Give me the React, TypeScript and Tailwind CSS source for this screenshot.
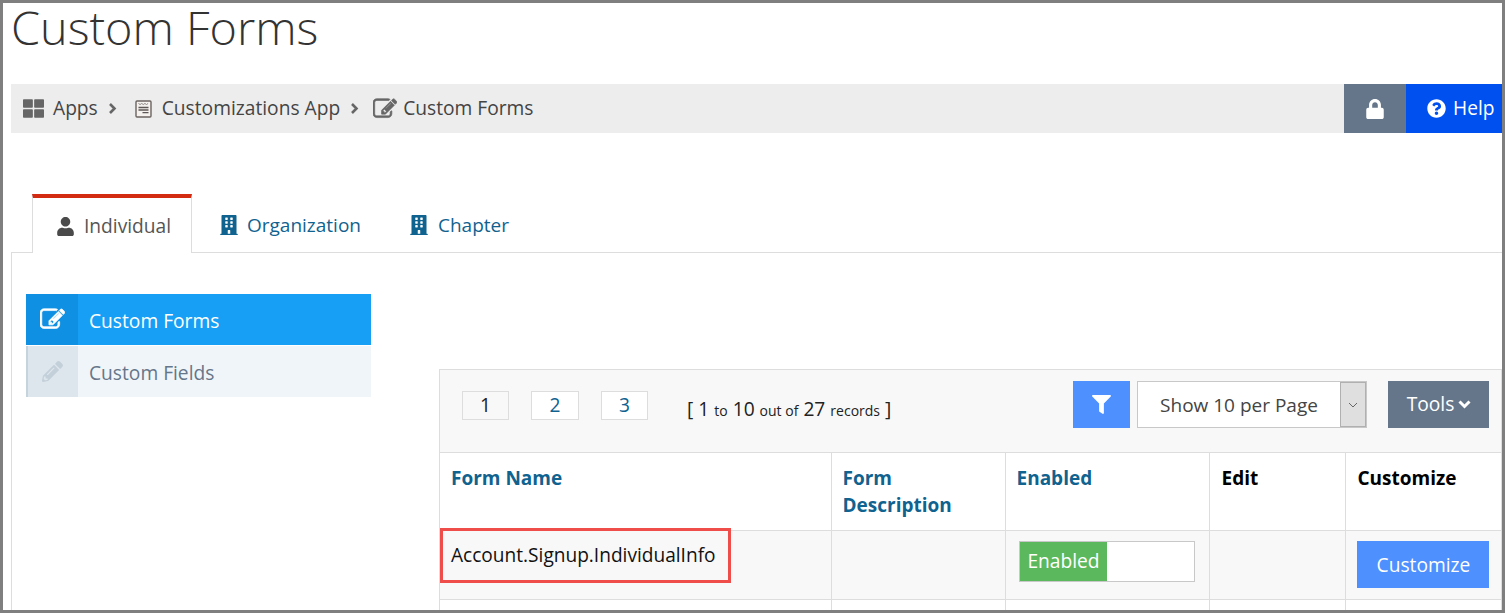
import { FaThLarge, FaUser, FaBuilding, FaPencilAlt, FaFilter, FaLock, FaQuestionCircle } from 'react-icons/fa'

const AppIcon = () => (
  <svg width="17" height="18" viewBox="0 0 17 18" className="shrink-0">
    <rect x="1" y="1" width="15" height="16" rx="1" fill="#f4f1ee" stroke="#6b6360" strokeWidth="1.4" />
    <path d="M3.5 3.5l1.6 1 1.6-1 1.6 1 1.6-1 1.6 1 1.6-1" fill="none" stroke="#8a8482" strokeWidth="1" />
    <path d="M3.5 7.5h10M3.5 10h10M7.5 12.7h6" stroke="#5d5755" strokeWidth="1.3" />
  </svg>
)

const EditIcon = ({ size }: { size: number }) => (
  <svg width={size} height={size} viewBox="0 0 1792 1792" fill="currentColor" stroke="currentColor" strokeWidth="50" className="shrink-0">
    <path d="M888 1184l116-116-152-152-116 116v56h96v96h56zm440-720q-16-16-33 1l-350 350q-17 17-1 33t33-1l350-350q17-17 1-33zm80 594v190q0 119-84.5 203.5t-203.5 84.5h-832q-119 0-203.5-84.5t-84.5-203.5v-832q0-119 84.5-203.5t203.5-84.5h832q63 0 117 25 15 7 18 23 3 17-9 29l-49 49q-14 14-32 8-23-6-45-6h-832q-66 0-113 47t-47 113v832q0 66 47 113t113 47h832q66 0 113-47t47-113v-126q0-13 9-22l64-64q15-15 35-7t20 29zm-96-738l288 288-672 672h-288v-288zm444 132l-92 92-288-288 92-92q28-28 68-28t68 28l152 152q28 28 28 68t-28 68z" />
  </svg>
)

const Sep = () => (
  <svg width="9" height="13" viewBox="0 0 9 13" className="mx-[10px] shrink-0">
    <path d="M2 2l4.5 4.5L2 11" fill="none" stroke="#666" strokeWidth="2.6" />
  </svg>
)

const ChevronDown = () => (
  <svg width="13" height="9" viewBox="0 0 13 9" className="shrink-0">
    <path d="M1.5 1.5l5 5 5-5" fill="none" stroke="#fff" strokeWidth="3" />
  </svg>
)

export default function App() {
  return (
    <div className="h-[613px] w-[1505px] overflow-hidden border-[3px] border-[#7f7f7f] bg-white text-[#333] font-['Open_Sans',sans-serif]">
      <h1 className="ml-[8px] h-[81px] text-[46.8px] font-light leading-[49px] text-[#333]">Custom Forms</h1>

      {/* Breadcrumb */}
      <div className="ml-[8px] flex h-[49px] items-center bg-[#ededed] text-[19.2px] text-[#444]">
        <FaThLarge className="ml-[12px] mr-[9px] text-[21px] text-[#666]" />
        <span>Apps</span>
        <Sep />
        <span className="ml-[8px]"><AppIcon /></span>
        <span className="ml-[10px]">Customizations App</span>
        <Sep />
        <span className="ml-[4px] text-[#666]"><EditIcon size={24} /></span>
        <span className="ml-[6px]">Custom Forms</span>
        <div className="ml-auto flex h-full text-white">
          <div className="flex w-[62px] items-center justify-center bg-[#66768a]">
            <FaLock className="text-[20px]" />
          </div>
          <div className="flex w-[96px] items-center gap-[7px] bg-[#0050ef] pl-[21px]">
            <FaQuestionCircle className="text-[19px]" />
            <span>Help</span>
          </div>
        </div>
      </div>

      {/* Tabs */}
      <div className="ml-[8px] mt-[61px] flex h-[59px] border-b border-[#dddddd] pl-[21px] text-[19px]">
        <div className="-mb-px flex w-[160px] items-center justify-center gap-[9px] border-x border-[#dddddd] border-t-4 border-t-[#d32a12] bg-white pl-[3px] pt-[2px] text-[19.2px] text-[#555]">
          <FaUser className="text-[19px] text-[#4a4a4a]" />
          <span>Individual</span>
        </div>
        <div className="ml-[27px] flex items-center gap-[8px] pt-[4px] text-[#10628f]">
          <FaBuilding className="text-[20px]" />
          <span>Organization</span>
        </div>
        <div className="ml-[48px] flex items-center gap-[9px] pt-[4px] text-[#10628f]">
          <FaBuilding className="text-[20px]" />
          <span>Chapter</span>
        </div>
      </div>

      <div className="ml-[8px] flex border-l border-[#dddddd] pl-[14px] pt-[41px]">
        {/* Side menu */}
        <div className="w-[345px] shrink-0 text-[19.2px]">
          <div className="flex h-[51px] items-center bg-[#169ff5] text-white">
            <div className="flex h-full w-[52px] items-center justify-center bg-[#1090e2]">
              <EditIcon size={25} />
            </div>
            <span className="ml-[11px] pt-[3px]">Custom Forms</span>
          </div>
          <div className="mt-px flex h-[51px] items-center bg-[#f0f5f9] text-[#66768a]">
            <div className="flex h-full w-[52px] items-center justify-center border-l-2 border-[#c5d3dd] bg-[#dee6ed]">
              <FaPencilAlt className="mr-[2px] text-[21px] text-[#c3d0da]" />
            </div>
            <span className="ml-[11px] pt-[3px]">Custom Fields</span>
          </div>
        </div>

        {/* Table panel */}
        <div className="relative ml-[68px] mt-[75px] w-[1063px] shrink-0 border border-[#dddddd]">
          <div className="flex h-[82px] bg-[#f8f8f8] pt-[11px]">
            <div className="mt-[10px] ml-[22px] flex h-[29px] text-[19.2px]">
              <span className="flex w-[47px] items-center justify-center border border-[#dddddd] text-[#222]">1</span>
              <span className="ml-[22px] flex w-[48px] items-center justify-center border border-[#dddddd] bg-white text-[#10628f]">2</span>
              <span className="ml-[22px] flex w-[47px] items-center justify-center border border-[#dddddd] bg-white text-[#10628f]">3</span>
            </div>
            <div className="ml-[39px] mt-[14px] flex h-[29px] items-baseline gap-[5px] text-[19.2px] text-[#222]">
              <span>[ 1</span>
              <span className="text-[14px]">to</span>
              <span>10</span>
              <span className="text-[14px]">out of</span>
              <span>27</span>
              <span className="text-[14px]">records</span>
              <span>]</span>
            </div>
            <div className="ml-auto flex h-[47px] pr-[12px]">
              <div className="flex w-[57px] items-center justify-center bg-[#4d90fe] text-white">
                <FaFilter className="text-[19px]" />
              </div>
              <div className="ml-[7px] flex w-[230px] border border-[#c8c8c8] bg-white text-[19px] text-[#444]">
                <span className="flex flex-1 items-center justify-center pt-[2px]">Show 10 per Page</span>
                <span className="flex w-[26px] items-center justify-center border border-[#b0b0b0] bg-[#dfdfdf]">
                  <svg width="10" height="6" viewBox="0 0 10 6">
                    <path d="M1 1l4 4 4-4" fill="none" stroke="#666" strokeWidth="1" />
                  </svg>
                </span>
              </div>
              <div className="ml-[21px] flex w-[101px] items-center justify-center gap-[4px] bg-[#66768a] pl-px text-[19.2px] text-white">
                <span>Tools</span>
                <ChevronDown />
              </div>
            </div>
          </div>

          <table className="w-full table-fixed border-collapse text-[19.2px]">
            <colgroup>
              <col className="w-[391px]" />
              <col className="w-[174px]" />
              <col className="w-[204px]" />
              <col className="w-[136px]" />
              <col />
            </colgroup>
            <thead>
              <tr className="h-[78px] bg-white align-top text-[19px] leading-[27px]">
                <th className="border-y border-r border-[#dddddd] px-[11px] pt-[12px] text-left font-bold text-[#10628f]">Form Name</th>
                <th className="border border-[#dddddd] px-[11px] pt-[12px] text-left font-bold text-[#10628f]">Form Description</th>
                <th className="border border-[#dddddd] px-[11px] pt-[12px] text-left font-bold text-[#10628f]">Enabled</th>
                <th className="border border-[#dddddd] pl-[12px] pr-[11px] pt-[12px] text-left font-bold text-black">Edit</th>
                <th className="border-y border-l border-[#dddddd] pl-[12px] pr-[11px] pt-[12px] text-left font-bold text-black">Customize</th>
              </tr>
            </thead>
            <tbody>
              <tr className="h-[69px] bg-[#f8f8f8] align-top">
                <td className="border-y border-r border-[#dddddd] px-[11px] pt-[10px] text-[19.1px] text-[#111]">Account.Signup.IndividualInfo</td>
                <td className="border border-[#dddddd]"></td>
                <td className="border border-[#dddddd] px-[13px] pt-[10px]">
                  <div className="flex h-[41px] w-[176px] border border-[#c8c8c8] bg-white">
                    <span className="flex w-[87px] items-center justify-center bg-[#5cb85c] pl-px text-white">Enabled</span>
                  </div>
                </td>
                <td className="border border-[#dddddd]"></td>
                <td className="border-y border-l border-[#dddddd] px-[11px] pt-[10px]">
                  <div className="flex h-[47px] w-[132px] items-center justify-center bg-[#4d90fe] pl-[2px] pt-px text-white">Customize</div>
                </td>
              </tr>
              <tr className="h-[40px] bg-white">
                <td className="border-y border-r border-[#dddddd]"></td>
                <td className="border border-[#dddddd]"></td>
                <td className="border border-[#dddddd]"></td>
                <td className="border border-[#dddddd]"></td>
                <td className="border-y border-l border-[#dddddd]"></td>
              </tr>
            </tbody>
          </table>

          {/* red annotation box */}
          <div className="absolute left-0 top-[158px] h-[55px] w-[291px] border-[3px] border-[#ef4d4a]" />
        </div>
      </div>
    </div>
  )
}
